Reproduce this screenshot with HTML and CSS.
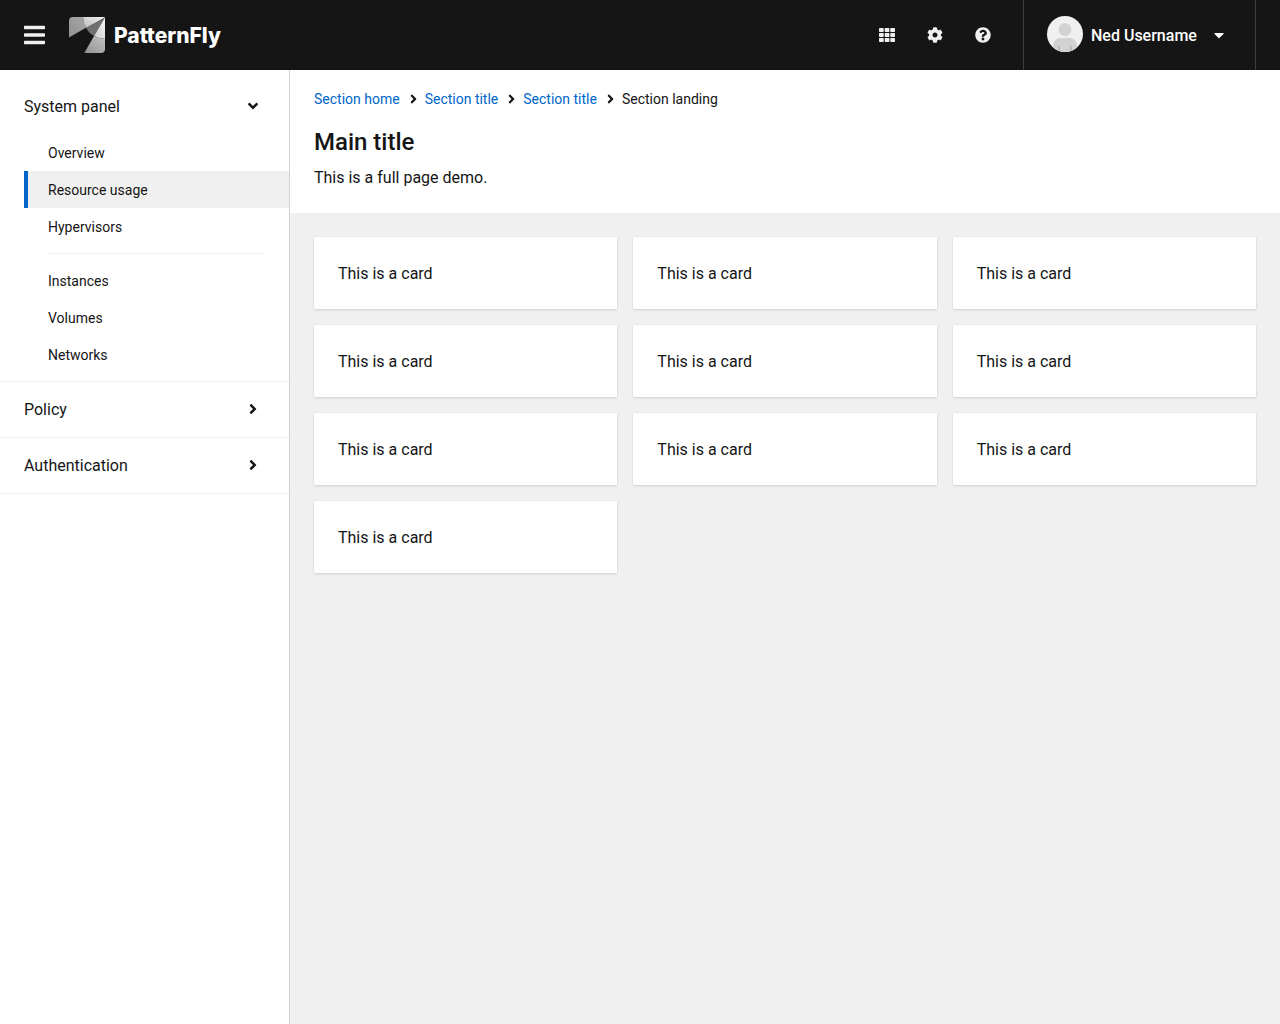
FILE: index.html
```html
<!DOCTYPE html>
<html lang="en">
<head>
<meta charset="utf-8">
<meta name="viewport" content="width=device-width, initial-scale=1">
<title>PatternFly</title>
<link rel="stylesheet" href="styles.css">
</head>
<body>
<svg class="sprite" aria-hidden="true">
  <symbol id="angle" viewBox="0 0 256 512"><path d="M224.3 273l-136 136c-9.4 9.4-24.6 9.4-33.9 0l-22.6-22.6c-9.4-9.4-9.4-24.6 0-33.9l96.4-96.4-96.4-96.4c-9.4-9.4-9.4-24.6 0-33.9L54.3 103c9.4-9.4 24.6-9.4 33.9 0l136 136c9.5 9.4 9.5 24.6.1 34z"/></symbol>
</svg>
<div class="page">
  <header class="masthead">
    <button class="menu-toggle" type="button" aria-label="Global navigation">
      <svg width="21" height="24" viewBox="0 0 448 512"><path d="M16 132h416c8.837 0 16-7.163 16-16V76c0-8.837-7.163-16-16-16H16C7.163 60 0 67.163 0 76v40c0 8.837 7.163 16 16 16zm0 160h416c8.837 0 16-7.163 16-16v-40c0-8.837-7.163-16-16-16H16c-8.837 0-16 7.163-16 16v40c0 8.837 7.163 16 16 16zm0 160h416c8.837 0 16-7.163 16-16v-40c0-8.837-7.163-16-16-16H16c-8.837 0-16 7.163-16 16v40c0 8.837 7.163 16 16 16z"/></svg>
    </button>
    <a class="brand" href="#">
      <svg width="36" height="36" viewBox="0 0 36 36" aria-hidden="true">
        <defs>
          <linearGradient id="shade-left" x1="0" y1="1" x2="1" y2="0"><stop offset="0" stop-color="#909090"/><stop offset="1" stop-color="#a8a8a8"/></linearGradient>
          <linearGradient id="shade-top" x1="0" y1="1" x2="1" y2="0"><stop offset="0" stop-color="#b8b8b8"/><stop offset="1" stop-color="#f5f5f5"/></linearGradient>
          <linearGradient id="shade-right" x1="0" y1="1" x2="1" y2="0"><stop offset="0" stop-color="#c8c8c8"/><stop offset="1" stop-color="#fafafa"/></linearGradient>
          <linearGradient id="shade-bottom" x1="0" y1="1" x2="1" y2="0"><stop offset="0" stop-color="#909090"/><stop offset="1" stop-color="#c4c4c4"/></linearGradient>
        </defs>
        <path fill="url(#shade-left)" d="M4 0h10a22 22 0 0 0 3 10.800L0 20.500V4a4 4 0 0 1 4-4z"/>
        <path fill="url(#shade-top)" d="M14 0h18a4 4 0 0 1 4 .5L17 10.900A22 22 0 0 1 14 0z"/>
        <path fill="#707070" d="M36 .5L17 10.900a22 22 0 0 0 8 8.200z"/>
        <path fill="url(#shade-right)" d="M36 .5V22a22 22 0 0 1-11-2.900z"/>
        <path fill="url(#shade-bottom)" d="M25 19.100A22 22 0 0 0 36 22v10a4 4 0 0 1-4 4H15.300z"/>
      </svg>
      <span>PatternFly</span>
    </a>
    <div class="tools">
      <button class="tool" type="button" aria-label="Applications">
        <svg width="16" height="16" viewBox="0 0 16 16"><rect x="0" y="1" width="4.700" height="4" rx=".7"/><rect x="5.700" y="1" width="4.700" height="4" rx=".7"/><rect x="11.300" y="1" width="4.700" height="4" rx=".7"/><rect x="0" y="6" width="4.700" height="4" rx=".7"/><rect x="5.700" y="6" width="4.700" height="4" rx=".7"/><rect x="11.300" y="6" width="4.700" height="4" rx=".7"/><rect x="0" y="11" width="4.700" height="4" rx=".7"/><rect x="5.700" y="11" width="4.700" height="4" rx=".7"/><rect x="11.300" y="11" width="4.700" height="4" rx=".7"/></svg>
      </button>
      <button class="tool" type="button" aria-label="Settings">
        <svg width="16" height="16" viewBox="0 0 512 512"><path d="M487.4 315.7l-42.6-24.6c4.3-23.2 4.3-47 0-70.2l42.6-24.6c4.900-2.800 7.100-8.600 5.500-14-11.100-35.600-30-67.800-54.700-94.600-3.800-4.100-10-5.100-14.800-2.300L380.800 110c-17.900-15.400-38.500-27.300-60.800-35.100V25.800c0-5.600-3.900-10.500-9.400-11.700-36.700-8.200-74.300-7.800-109.200 0-5.500 1.200-9.400 6.100-9.400 11.700V75c-22.200 7.900-42.800 19.800-60.800 35.100L88.700 85.500c-4.900-2.800-11-1.900-14.800 2.300-24.700 26.700-43.600 58.900-54.700 94.600-1.700 5.400.6 11.200 5.500 14L67.300 221c-4.300 23.200-4.300 47 0 70.200l-42.600 24.600c-4.900 2.800-7.100 8.600-5.500 14 11.100 35.600 30 67.800 54.700 94.600 3.800 4.100 10 5.100 14.800 2.300l42.600-24.600c17.900 15.400 38.500 27.300 60.800 35.100v49.200c0 5.600 3.900 10.500 9.400 11.700 36.700 8.200 74.300 7.800 109.200 0 5.500-1.200 9.400-6.100 9.400-11.700v-49.200c22.200-7.900 42.800-19.800 60.800-35.100l42.600 24.600c4.900 2.800 11 1.900 14.800-2.300 24.700-26.700 43.600-58.900 54.700-94.600 1.500-5.500-.7-11.300-5.600-14.100zM256 336c-44.100 0-80-35.900-80-80s35.900-80 80-80 80 35.900 80 80-35.900 80-80 80z"/></svg>
      </button>
      <button class="tool" type="button" aria-label="Help">
        <svg width="16" height="16" viewBox="0 0 512 512"><path d="M504 256c0 136.997-111.043 248-248 248S8 392.997 8 256C8 119.083 119.043 8 256 8s248 111.083 248 248zM262.655 90c-54.497 0-89.255 22.957-116.549 63.758-3.536 5.286-2.353 12.415 2.715 16.258l34.699 26.310c5.205 3.947 12.621 3.008 16.665-2.122 17.864-22.658 30.113-35.797 57.303-35.797 20.429 0 45.698 13.148 45.698 32.958 0 14.976-12.363 22.667-32.534 33.976C247.128 238.528 216 254.941 216 296v4c0 6.627 5.373 12 12 12h56c6.627 0 12-5.373 12-12v-1.333c0-28.462 83.186-29.647 83.186-106.667 0-58.002-60.165-102-116.531-102zM256 338c-25.365 0-46 20.635-46 46 0 25.364 20.635 46 46 46s46-20.636 46-46c0-25.364-20.635-46-46-46z"/></svg>
      </button>
    </div>
    <button class="user" type="button">
      <svg class="avatar" width="36" height="36" viewBox="0 0 36 36" aria-hidden="true">
        <rect width="36" height="36" fill="#f0f0f0"/>
        <circle cx="18" cy="13.500" r="6.500" fill="#d2d2d2"/>
        <path fill="#d2d2d2" d="M6 36v-5c0-6 3-9 8-9h8c5 0 8 3 8 9v5z"/>
        <path fill="#b8bbbe" d="M11 30h2v6h-2zM23 30h2v6h-2z"/>
      </svg>
      <span>Ned Username</span>
      <svg class="caret" width="10" height="16" viewBox="0 0 320 512" aria-hidden="true"><path d="M31.300 192h257.300c17.800 0 26.700 21.500 14.100 34.100L174.100 354.800c-7.800 7.800-20.500 7.800-28.300 0L17.200 226.100C4.600 213.500 13.500 192 31.300 192z"/></svg>
    </button>
  </header>
  <nav class="sidebar" aria-label="Global">
    <section class="nav-section">
      <button class="nav-toggle" type="button" aria-expanded="true">System panel <svg class="angle" aria-hidden="true"><use href="#angle"/></svg></button>
      <ul class="subnav">
        <li><a href="#">Overview</a></li>
        <li><a class="current" href="#" aria-current="page">Resource usage</a></li>
        <li><a href="#">Hypervisors</a></li>
        <li class="divider" role="separator"></li>
        <li><a href="#">Instances</a></li>
        <li><a href="#">Volumes</a></li>
        <li><a href="#">Networks</a></li>
      </ul>
    </section>
    <section class="nav-section">
      <button class="nav-toggle" type="button" aria-expanded="false">Policy <svg class="angle" aria-hidden="true"><use href="#angle"/></svg></button>
    </section>
    <section class="nav-section">
      <button class="nav-toggle" type="button" aria-expanded="false">Authentication <svg class="angle" aria-hidden="true"><use href="#angle"/></svg></button>
    </section>
  </nav>
  <main class="main">
    <div class="intro">
      <nav aria-label="Breadcrumb">
        <ol class="breadcrumb">
          <li><a href="#">Section home</a></li>
          <li><svg aria-hidden="true"><use href="#angle"/></svg><a href="#">Section title</a></li>
          <li><svg aria-hidden="true"><use href="#angle"/></svg><a href="#">Section title</a></li>
          <li aria-current="page"><svg aria-hidden="true"><use href="#angle"/></svg>Section landing</li>
        </ol>
      </nav>
      <h1>Main title</h1>
      <p>This is a full page demo.</p>
    </div>
    <div class="gallery">
      <article class="card">This is a card</article>
      <article class="card">This is a card</article>
      <article class="card">This is a card</article>
      <article class="card">This is a card</article>
      <article class="card">This is a card</article>
      <article class="card">This is a card</article>
      <article class="card">This is a card</article>
      <article class="card">This is a card</article>
      <article class="card">This is a card</article>
      <article class="card">This is a card</article>
    </div>
  </main>
</div>
</body>
</html>
```
FILE: styles.css
```css
* { box-sizing: border-box; }

body {
  margin: 0;
  background: #f0f0f0;
  color: #151515;
  font: 16px/24px Roboto, sans-serif;
}

button {
  margin: 0;
  padding: 0;
  border: 0;
  background: none;
  color: inherit;
  font: inherit;
  cursor: pointer;
}

a { color: inherit; text-decoration: none; }
ul, ol { margin: 0; padding: 0; list-style: none; }
svg { display: block; flex: none; fill: currentColor; }
.sprite { position: absolute; width: 0; height: 0; }

.page {
  display: grid;
  grid-template: auto 1fr / 290px minmax(0, 1fr);
  min-height: 100vh;
}

/* Masthead */
.masthead {
  grid-column: 1 / -1;
  display: flex;
  align-items: stretch;
  min-height: 70px;
  padding: 0 24px;
  background: #151515;
  color: #fff;
}
.menu-toggle { margin-right: 24px; color: #f0f0f0; }
.brand {
  display: flex;
  align-items: center;
  gap: 9px;
  font-family: Inter, sans-serif;
  font-size: 21px;
  font-weight: 800;
}
.brand span, .user span { padding-top: 2px; }
.tools { display: flex; margin-left: auto; margin-right: 16px; color: #f0f0f0; }
.tool { display: flex; align-items: center; justify-content: center; width: 48px; }
.user {
  display: flex;
  align-items: center;
  gap: 8px;
  min-width: 233px;
  padding: 0 31px 0 23px;
  border: solid #3c3f42;
  border-width: 0 1px;
  font-weight: 500;
}
.avatar { margin-bottom: 2px; border-radius: 50%; }
.caret { margin-left: auto; }

/* Sidebar */
.sidebar {
  padding-top: 9px;
  border-right: 1px solid #d2d2d2;
  background: #fff;
}
.nav-section { border-bottom: 1px solid #f0f0f0; }
.nav-toggle {
  display: flex;
  align-items: center;
  justify-content: space-between;
  width: 100%;
  padding: 16px 32px 16px 24px;
  line-height: 23px;
  text-align: left;
}
.angle { width: 8px; height: 16px; margin-bottom: 2px; }
[aria-expanded="true"] .angle { transform: rotate(90deg); }
.subnav { padding: 0 0 8px 24px; font-size: 14px; line-height: 21px; }
.subnav a { display: block; padding: 9px 24px 7px 20px; border-left: 4px solid transparent; }
.subnav .current { border-color: #06c; background: #f0f0f0; }
.divider { height: 1px; margin: 8px 24px; background: #f0f0f0; }

/* Main content */
.intro { padding: 18px 24px 23px; background: #fff; }
.breadcrumb { display: flex; flex-wrap: wrap; font-size: 14px; line-height: 22px; }
.breadcrumb li { display: flex; align-items: center; }
.breadcrumb a { color: #06c; }
.breadcrumb svg { width: 7px; height: 14px; margin: 0 8px 0 10px; }
h1 { margin: 17px 0 8px; font-size: 24px; font-weight: 500; line-height: 31px; }
p { margin: 0; }
.gallery {
  display: grid;
  grid-template-columns: repeat(auto-fill, minmax(250px, 1fr));
  gap: 16px;
  padding: 24px;
}
.card {
  padding: 25px 24px 23px;
  background: #fff;
  box-shadow: 0 1px 2px rgba(3, 3, 3, .12), 0 0 2px rgba(3, 3, 3, .06);
}
```
